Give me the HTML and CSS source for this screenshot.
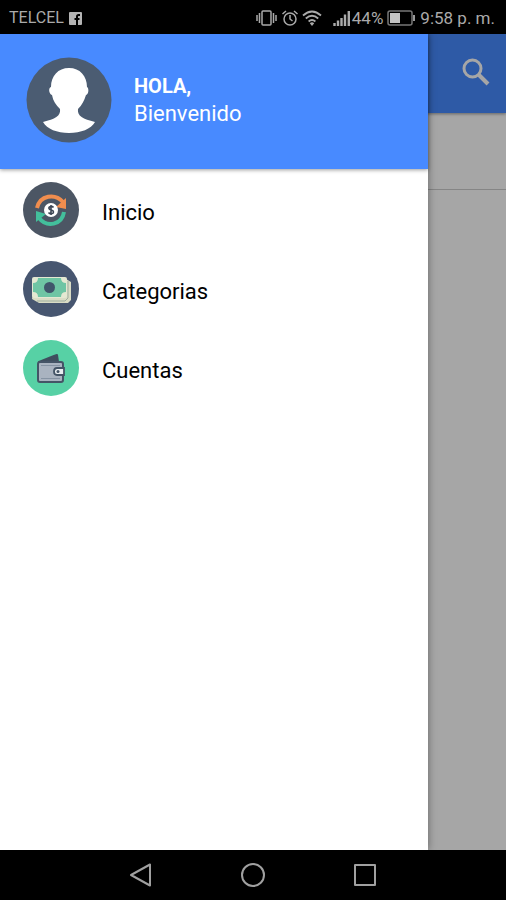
FILE: index.html
```
<!DOCTYPE html>
<html lang="es">
<head>
    <meta charset="UTF-8">
    <meta name="viewport" content="width=device-width, initial-scale=1">
    <title>Menú</title>
    <link rel="stylesheet" href="styles.css">
</head>

<body>
    <!-- barra de estado -->
    <div class="status">
        <span class="carrier">TELCEL</span>
        <svg class="fb" width="13" height="13" viewBox="0 0 13 13">
            <rect width="13" height="13" rx="1" fill="#b4b4b4"/>
            <path d="M11 3H9.5Q8 3 8 4.500V13M5.500 7H10.500" fill="none" stroke="#000" stroke-width="2"/>
        </svg>
        <div class="status-right">
            <svg width="22" height="18" viewBox="0 0 22 18" fill="none" stroke="#aaa" stroke-width="1.500">
                <rect x="6" y="2" width="9" height="14" rx="1"/>
                <path d="M3.500 4V14M1 6V12M17.500 4V14M20 6V12"/>
            </svg>
            <svg class="alarm" width="18" height="18" viewBox="0 0 18 18" fill="none" stroke="#aaa" stroke-width="1.500">
                <circle cx="9" cy="10" r="6"/>
                <path d="M9 6V10L11.500 12M1.500 5L5 2M16.500 5L13 2"/>
            </svg>
            <svg class="wifi" width="20" height="18" viewBox="0 0 20 18" fill="none" stroke="#aaa" stroke-width="1.800">
                <path d="M1 6.500Q10 -1.500 19 6.500M3.800 9.500Q10 4 16.200 9.500M6.600 12.500Q10 9.500 13.400 12.500"/>
                <path d="M7.800 14.200Q10 12.500 12.200 14.200L10 17Z" fill="#aaa" stroke="none"/>
            </svg>
            <svg class="signal" width="18" height="18" viewBox="0 0 18 18" fill="none" stroke="#aaa" stroke-width="2.400">
                <path d="M1.500 17V14M5 17V11.500M8.500 17V9M12 17V5.500M15.800 17V2"/>
            </svg>
            <span class="percent">44%</span>
            <svg class="battery" width="29" height="16" viewBox="0 0 29 16">
                <rect x="1" y="1" width="24" height="14" rx="2" fill="none" stroke="#777" stroke-width="1.500"/>
                <rect x="3" y="3" width="10" height="10" fill="#c4c4c4"/>
                <rect x="26" y="5" width="2" height="6" fill="#999"/>
            </svg>
            <span class="time">9:58 p. m.</span>
        </div>
    </div>

    <div class="app">
        <!-- página detrás del menú -->
        <div class="page">
            <header class="toolbar">
                <button class="search" type="button" aria-label="Buscar">
                    <svg width="28" height="28" viewBox="0 0 28 28" fill="none" stroke="#fff" stroke-width="3">
                        <circle cx="10.500" cy="10.500" r="8.500"/>
                        <path d="M16.500 16.500L26 26" stroke-width="4"/>
                    </svg>
                </button>
            </header>
            <div class="subheader"></div>
        </div>
        <div class="backdrop"></div>

        <!-- menú lateral -->
        <aside class="drawer">
            <header class="profile">
                <svg class="avatar" width="86" height="86" viewBox="0 0 86 86">
                    <circle cx="43" cy="43" r="42.500" fill="#4b5c72"/>
                    <path d="M43 11C54 11 61 19 61 30C63 31 63 37 60 38C58 44 56 48 52 52C51 59 57 62 69 65C65 72 55 76 43 76C31 76 21 72 17 65C29 62 35 59 34 52C30 48 27 44 26 38C23 37 22 31 25 30C25 19 32 11 43 11Z" fill="#fff"/>
                </svg>
                <div class="greeting">
                    <strong class="hola">HOLA,</strong>
                    <span class="welcome">Bienvenido</span>
                </div>
            </header>

            <nav>
                <ul class="menu">
                    <li>
                        <a href="#">
                            <svg class="icon" width="56" height="56" viewBox="0 0 56 56">
                                <circle cx="28" cy="28" r="28" fill="#4c5664"/>
                                <path d="M14 26C17 13 32 11 40 20" fill="none" stroke="#f08d4e" stroke-width="4"/>
                                <path d="M43 16V27L33 25Z" fill="#f08d4e"/>
                                <path d="M41 30C39 43 24 46 16 36" fill="none" stroke="#43bf9c" stroke-width="4"/>
                                <path d="M13 40V29L23 32Z" fill="#43bf9c"/>
                                <circle cx="28" cy="28" r="7" fill="#fff"/>
                                <path d="M30.500 25.500C29 23.500 25.500 24.500 26 26.500C26.500 28.500 30.500 27.500 30.500 30C30.500 32 27 32.500 25.500 30.500M28 23V33" fill="none" stroke="#3c4654" stroke-width="1.600"/>
                            </svg>
                            <span>Inicio</span>
                        </a>
                    </li>
                    <li>
                        <a href="#">
                            <svg class="icon" width="56" height="56" viewBox="0 0 56 56">
                                <circle cx="28" cy="28" r="28" fill="#475670"/>
                                <path d="M12 18H43L48 21V39L45 42H16L9 38Z" fill="#d9dcc5"/>
                                <path d="M45 20V37L42 40H14" fill="none" stroke="#9fae9f" stroke-width="1"/>
                                <rect x="9" y="16" width="35" height="21" rx="2" fill="#e4e8d2"/>
                                <path d="M15 17H38Q38 22 43 22V31Q38 31 38 36H15Q15 31 10 31V22Q15 22 15 17Z" fill="#6fc5a4"/>
                                <circle cx="26.500" cy="26.500" r="5.500" fill="#40556b"/>
                            </svg>
                            <span>Categorias</span>
                        </a>
                    </li>
                    <li>
                        <a href="#">
                            <svg class="icon" width="56" height="56" viewBox="0 0 56 56">
                                <circle cx="28" cy="28" r="28" fill="#57d1a5"/>
                                <path d="M16 22L31 16L34 15L35 22Z" fill="#3f4f5f" stroke="#3f4f5f" stroke-width="2" stroke-linejoin="round"/>
                                <rect x="15" y="22" width="25" height="20" rx="2" fill="#a9b3c0" stroke="#445466" stroke-width="2"/>
                                <path d="M18 25.500H37M18 38.500H37" fill="none" stroke="#8593a3" stroke-width="1"/>
                                <path d="M41 28H34Q31 28 31 31.500Q31 35 34 35H41Z" fill="#e8edf0" stroke="#445466" stroke-width="1.800"/>
                                <circle cx="35" cy="31.500" r="1.500" fill="#445466"/>
                            </svg>
                            <span>Cuentas</span>
                        </a>
                    </li>
                </ul>
            </nav>
        </aside>
    </div>

    <!-- botones del sistema -->
    <div class="sysbar">
        <button type="button" aria-label="Atrás">
            <svg width="24" height="24" viewBox="0 0 24 24"><path d="M21 1.500V22.500L2 12Z"/></svg>
        </button>
        <button type="button" aria-label="Inicio">
            <svg width="24" height="24" viewBox="0 0 24 24"><circle cx="12" cy="12" r="11"/></svg>
        </button>
        <button type="button" aria-label="Recientes">
            <svg width="24" height="24" viewBox="0 0 24 24"><rect x="2" y="2" width="20" height="20"/></svg>
        </button>
    </div>
</body>
</html>
```
FILE: styles.css
```
* {
    box-sizing: border-box;
}

body {
    margin: 0;
    min-height: 100vh;
    display: flex;
    flex-direction: column;
    font-family: Roboto, "Liberation Sans", sans-serif;
    background: #000;
}

svg {
    display: block;
    flex: none;
}

button {
    padding: 0;
    border: 0;
    background: none;
}

ul {
    margin: 0;
    padding: 0;
    list-style: none;
}

/* barra de estado */
.status {
    display: flex;
    align-items: center;
    height: 34px;
    padding: 2px 11px 0 9px;
    font-size: 17px;
    line-height: 20px;
    color: #aaa;
}

.carrier {
    font-size: 16px;
}

.fb {
    margin-left: 5px;
}

.status-right {
    display: flex;
    align-items: center;
    margin-left: auto;
}

.alarm,
.wifi {
    margin-left: 3px;
}

.signal {
    margin-left: 11px;
}

.percent {
    margin-left: 1px;
}

.battery {
    margin: 0 4px;
}

.app {
    position: relative;
    flex: 1;
    display: flex;
    overflow: hidden;
}

/* página */
.page {
    flex: 1;
    background: #fff;
}

.toolbar {
    display: flex;
    justify-content: flex-end;
    align-items: center;
    height: 79px;
    padding: 0 16px 4px;
    background: #488aff;
    box-shadow: 0 1px 3px rgba(0, 0, 0, .4);
}

.subheader {
    height: 77px;
    border-bottom: 1px solid #ccc;
}

.backdrop {
    position: absolute;
    inset: 0;
    background: rgba(0, 0, 0, .35);
}

/* menú lateral */
.drawer {
    position: absolute;
    top: 0;
    bottom: 0;
    left: 0;
    width: calc(100% - 78px);
    background: #fff;
    box-shadow: 0 0 8px rgba(0, 0, 0, .4);
}

.profile {
    display: flex;
    align-items: center;
    gap: 22px;
    height: 135px;
    padding: 0 26px 4px;
    color: #fff;
    background: #488aff;
    box-shadow: 0 1px 4px rgba(0, 0, 0, .4);
}

.greeting {
    display: flex;
    flex-direction: column;
    line-height: 28px;
}

.hola {
    font-size: 20px;
}

.welcome {
    font-size: 22px;
}

.menu {
    display: flex;
    flex-direction: column;
    gap: 23px;
    padding: 13px 23px;
}

.menu a {
    display: flex;
    align-items: center;
    gap: 23px;
    font-size: 22px;
    line-height: 26px;
    color: #000;
    text-decoration: none;
}

.menu span {
    padding-top: 6px;
}

/* botones del sistema */
.sysbar {
    display: flex;
    justify-content: center;
    align-items: center;
    gap: 88px;
    height: 50px;
}

.sysbar svg {
    fill: none;
    stroke: #a0a0a0;
    stroke-width: 2;
    stroke-linejoin: round;
}
```
